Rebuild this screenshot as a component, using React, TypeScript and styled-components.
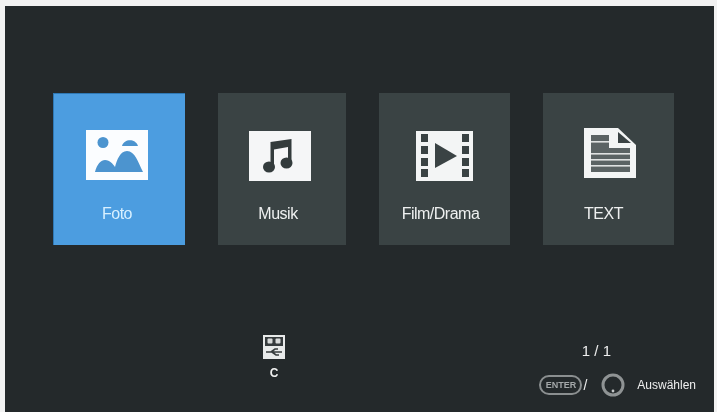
import styled, { createGlobalStyle } from "styled-components";

const GlobalStyle = createGlobalStyle`
  html, body {
    margin: 0;
    padding: 0;
    background-color: #f2f2f2;
    overflow: hidden;
  }
`;

const Screen = styled.main`
  box-sizing: border-box;
  width: 709px;
  height: 406px;
  margin: 6px 3px 0 5px;
  padding: 87px 0 0 48px;
  display: flex;
  flex-direction: column;
  background-color: #24292b;
  font-family: "Liberation Sans", Arial, sans-serif;
  filter: blur(0.6px);
`;

const CardRow = styled.div`
  display: grid;
  grid-template-columns: 132px 128px 131px 131px;
  column-gap: 33px;
  height: 152px;
`;

const Card = styled.div<{ $active?: boolean }>`
  display: flex;
  flex-direction: column;
  align-items: center;
  padding-top: 35px;
  box-sizing: border-box;
  background-color: ${(p) => (p.$active ? "#4c9de0" : "#3a4344")};
  color: ${(p) => (p.$active ? "#d8f0ff" : "#eef0f0")};
  box-shadow: ${(p) => (p.$active ? "inset 1px 1px 0 #2f78b4" : "none")};
`;

const IconSlot = styled.div<{ $top: number; $shift: number }>`
  box-sizing: border-box;
  height: 53px;
  padding-top: ${(p) => p.$top}px;
  margin-right: ${(p) => p.$shift}px;
  display: flex;
  align-items: flex-start;
  justify-content: center;
`;

const CardLabel = styled.span<{ $shift: number }>`
  margin-top: 24px;
  margin-right: ${(p) => p.$shift}px;
  font-size: 16px;
  line-height: 18px;
  letter-spacing: -0.5px;
`;

const Footer = styled.footer`
  flex: 1;
  display: flex;
  justify-content: space-between;
  padding: 0 18px 0 210px;
`;

const Device = styled.div`
  margin-top: 90px;
  display: flex;
  flex-direction: column;
  align-items: center;
  color: #f0f0f0;
  font-size: 12px;
  line-height: 13px;
  font-weight: bold;
`;

const DeviceName = styled.span`
  margin-top: 8px;
`;

const Status = styled.div`
  margin-top: 98px;
  display: flex;
  flex-direction: column;
  align-items: flex-end;
  color: #eeeeee;
`;

const PageCount = styled.div`
  margin-right: 85px;
  font-size: 15px;
  line-height: 16px;
`;

const Hints = styled.div`
  margin-top: 14px;
  display: flex;
  align-items: center;
  font-size: 12px;
  line-height: 24px;
`;

const EnterKey = styled.span`
  box-sizing: border-box;
  width: 43px;
  height: 20px;
  display: flex;
  align-items: center;
  justify-content: center;
  border: 2px solid #8b8f90;
  border-radius: 10px;
  color: #a4a8a9;
  font-size: 9px;
  font-weight: bold;
`;

const Slash = styled.span`
  margin: 0 14px 0 1px;
  font-size: 14px;
`;

const HintLabel = styled.span`
  margin-left: 12px;
`;

const PhotoIcon = () => (
  <svg width="62" height="50" viewBox="0 0 62 50">
    <rect width="62" height="50" fill="#fbfdff" />
    <circle cx="17" cy="12.5" r="5.5" fill="#4c94cf" />
    <path d="M36 16 C38 9 49 8 52 16 Z" fill="#4c94cf" />
    <path d="M9 42 C11 34 15 30 19 30 C24 30 27 34 29 37 C31 30 34 21 41 21 C49 21 52 32 57 42 Z" fill="#4c94cf" />
  </svg>
);

const MusicIcon = () => (
  <svg width="62" height="50" viewBox="0 0 62 50">
    <rect width="62" height="50" fill="#f5f6f7" />
    <path d="M21.5 11 L42.5 8 V32 H39 V16 L25 18.5 V36 H21.5 Z" fill="#333b3c" />
    <ellipse cx="20" cy="36" rx="6" ry="5.5" fill="#333b3c" />
    <ellipse cx="37.5" cy="32" rx="6" ry="5.5" fill="#333b3c" />
  </svg>
);

const filmHoles = [3, 15, 27, 38];

const FilmIcon = () => (
  <svg width="57" height="50" viewBox="0 0 57 50">
    <rect width="57" height="50" fill="#f3f5f5" />
    {filmHoles.map((y) => (
      <g key={y} fill="#3a4344">
        <rect x="5" y={y} width="7" height="8" />
        <rect x="46" y={y} width="7" height="8" />
      </g>
    ))}
    <path d="M19 12 L41 25 L19 37 Z" fill="#3a4344" />
  </svg>
);

const textLines = [13, 25, 31, 37];

const TextIcon = () => (
  <svg width="52" height="50" viewBox="0 0 52 50">
    <path d="M0 0 H34 L52 17 V50 H0 Z" fill="#f3f5f5" />
    <path d="M7 7 H25 V20 H46 V44 H7 Z" fill="#5b6364" />
    <path d="M34 4 L47 15 H34 Z" fill="#3a4344" />
    {textLines.map((y) => (
      <rect key={y} x="7" y={y} width={y === 13 ? 18 : 39} height="1.6" fill="#dfe2e2" />
    ))}
  </svg>
);

const UsbIcon = () => (
  <svg width="22" height="24" viewBox="0 0 22 24">
    <rect width="22" height="24" fill="#e8eaea" />
    <rect x="2" y="2" width="18" height="9" fill="#363b3d" />
    <rect x="4.5" y="3.5" width="5" height="5" rx="1" fill="#d8dada" />
    <rect x="12.5" y="3.5" width="5" height="5" rx="1" fill="#d8dada" />
    <path d="M3 17 H19 M8 17 L12 14 H15 M9 17 L13 20 H16" stroke="#363b3d" strokeWidth="1.6" fill="none" />
  </svg>
);

const RemoteDial = () => (
  <svg width="24" height="24" viewBox="0 0 24 24">
    <circle cx="12" cy="12" r="10" fill="none" stroke="#8f9394" strokeWidth="3" />
    <circle cx="12" cy="18" r="1.4" fill="#c4c7c8" />
  </svg>
);

const App = () => {
  return (
    <>
      <GlobalStyle />
      <Screen>
        <CardRow>
          <Card $active>
            <IconSlot $top={2} $shift={4}>
              <PhotoIcon />
            </IconSlot>
            <CardLabel $shift={4}>Foto</CardLabel>
          </Card>
          <Card>
            <IconSlot $top={3} $shift={4}>
              <MusicIcon />
            </IconSlot>
            <CardLabel $shift={8}>Musik</CardLabel>
          </Card>
          <Card>
            <IconSlot $top={3} $shift={0}>
              <FilmIcon />
            </IconSlot>
            <CardLabel $shift={8}>Film/Drama</CardLabel>
          </Card>
          <Card>
            <IconSlot $top={0} $shift={-3}>
              <TextIcon />
            </IconSlot>
            <CardLabel $shift={10}>TEXT</CardLabel>
          </Card>
        </CardRow>
        <Footer>
          <Device>
            <UsbIcon />
            <DeviceName>C</DeviceName>
          </Device>
          <Status>
            <PageCount>1 / 1</PageCount>
            <Hints>
              <EnterKey>ENTER</EnterKey>
              <Slash>/</Slash>
              <RemoteDial />
              <HintLabel>Auswählen</HintLabel>
            </Hints>
          </Status>
        </Footer>
      </Screen>
    </>
  );
};

export default App;
